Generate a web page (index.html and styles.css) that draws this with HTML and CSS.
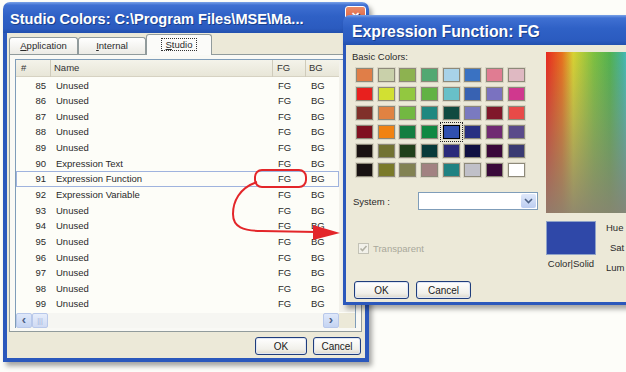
FILE: index.html
```html
<!DOCTYPE html>
<html lang="en">
<head>
    <meta charset="UTF-8">
    <meta name="viewport" content="width=device-width, initial-scale=1.0">
    <title>Studio Colors</title>
    <link rel="stylesheet" href="styles.css">
</head>
<body>
<div class="desktop">
    <div class="window studio">
        <div class="titlebar">
            <span class="title">Studio Colors: C:\Program Files\MSE\Ma...</span>
            <span class="close-btn">&#10005;</span>
        </div>
        <div class="window-body">
            <div class="tabs">
                <div class="tab tab-app"><u>A</u>pplication</div>
                <div class="tab tab-int"><u>I</u>nternal</div>
                <div class="tab tab-studio active"><span class="focus"><u>S</u>tudio</span></div>
            </div>
            <div class="tab-panel">
                <div class="listview">
                    <div class="lv-body">
                        <div class="lv-main">
                            <div class="lv-row lv-head">
                                <span>#</span><span>Name</span><span>FG</span><span>BG</span>
                            </div>
                            <div class="lv-rows">
                                <div class="lv-row"><span>85</span><span>Unused</span><span>FG</span><span>BG</span></div>
                                <div class="lv-row"><span>86</span><span>Unused</span><span>FG</span><span>BG</span></div>
                                <div class="lv-row"><span>87</span><span>Unused</span><span>FG</span><span>BG</span></div>
                                <div class="lv-row"><span>88</span><span>Unused</span><span>FG</span><span>BG</span></div>
                                <div class="lv-row"><span>89</span><span>Unused</span><span>FG</span><span>BG</span></div>
                                <div class="lv-row"><span>90</span><span>Expression Text</span><span>FG</span><span>BG</span></div>
                                <div class="lv-row selected"><span>91</span><span>Expression Function</span><span>FG</span><span>BG</span></div>
                                <div class="lv-row"><span>92</span><span>Expression Variable</span><span>FG</span><span>BG</span></div>
                                <div class="lv-row"><span>93</span><span>Unused</span><span>FG</span><span>BG</span></div>
                                <div class="lv-row"><span>94</span><span>Unused</span><span>FG</span><span>BG</span></div>
                                <div class="lv-row"><span>95</span><span>Unused</span><span>FG</span><span>BG</span></div>
                                <div class="lv-row"><span>96</span><span>Unused</span><span>FG</span><span>BG</span></div>
                                <div class="lv-row"><span>97</span><span>Unused</span><span>FG</span><span>BG</span></div>
                                <div class="lv-row"><span>98</span><span>Unused</span><span>FG</span><span>BG</span></div>
                                <div class="lv-row"><span>99</span><span>Unused</span><span>FG</span><span>BG</span></div>
                            </div>
                        </div>
                        <div class="vscroll"></div>
                    </div>
                    <div class="hscroll">
                        <span class="sb-btn">&#8249;</span>
                        <span class="sb-thumb">|||</span>
                        <span class="sb-track"></span>
                        <span class="sb-btn">&#8250;</span>
                        <span class="sb-corner"></span>
                    </div>
                </div>
            </div>
            <div class="buttons">
                <button class="btn btn-ok">OK</button>
                <button class="btn btn-cancel">Cancel</button>
            </div>
        </div>
    </div>

    <div class="window dialog">
        <div class="titlebar">
            <span class="title">Expression Function: FG</span>
        </div>
        <div class="window-body dialog-body">
            <div class="left-col">
                <div class="label">Basic Colors:</div>
                <div class="swatches">
                    <div class="swatch" style="background:#e07e48"></div>
                    <div class="swatch" style="background:#c9d0aa"></div>
                    <div class="swatch" style="background:#8db250"></div>
                    <div class="swatch" style="background:#52a872"></div>
                    <div class="swatch" style="background:#a8d2e8"></div>
                    <div class="swatch" style="background:#3a72c2"></div>
                    <div class="swatch" style="background:#e07c92"></div>
                    <div class="swatch" style="background:#dfb9c2"></div>

                    <div class="swatch" style="background:#e8201e"></div>
                    <div class="swatch" style="background:#d2e032"></div>
                    <div class="swatch" style="background:#92c840"></div>
                    <div class="swatch" style="background:#62b244"></div>
                    <div class="swatch" style="background:#68c0c8"></div>
                    <div class="swatch" style="background:#3862b2"></div>
                    <div class="swatch" style="background:#7a72c0"></div>
                    <div class="swatch" style="background:#d0388e"></div>

                    <div class="swatch" style="background:#80302a"></div>
                    <div class="swatch" style="background:#e08242"></div>
                    <div class="swatch" style="background:#72b842"></div>
                    <div class="swatch" style="background:#208880"></div>
                    <div class="swatch" style="background:#104a40"></div>
                    <div class="swatch" style="background:#7a7ac0"></div>
                    <div class="swatch" style="background:#80182a"></div>
                    <div class="swatch" style="background:#e84a48"></div>

                    <div class="swatch" style="background:#801020"></div>
                    <div class="swatch" style="background:#f08212"></div>
                    <div class="swatch" style="background:#127e40"></div>
                    <div class="swatch" style="background:#108842"></div>
                    <div class="swatch picked" style="background:#3050b0"></div>
                    <div class="swatch" style="background:#283082"></div>
                    <div class="swatch" style="background:#702a72"></div>
                    <div class="swatch" style="background:#5a4a8a"></div>

                    <div class="swatch" style="background:#1a1212"></div>
                    <div class="swatch" style="background:#727232"></div>
                    <div class="swatch" style="background:#20401a"></div>
                    <div class="swatch" style="background:#083a3a"></div>
                    <div class="swatch" style="background:#2a2a7a"></div>
                    <div class="swatch" style="background:#101042"></div>
                    <div class="swatch" style="background:#3a083a"></div>
                    <div class="swatch" style="background:#3a3a72"></div>

                    <div class="swatch" style="background:#181212"></div>
                    <div class="swatch" style="background:#7a7a2a"></div>
                    <div class="swatch" style="background:#828252"></div>
                    <div class="swatch" style="background:#a28282"></div>
                    <div class="swatch" style="background:#208282"></div>
                    <div class="swatch" style="background:#c0c0c8"></div>
                    <div class="swatch" style="background:#3a0a3a"></div>
                    <div class="swatch" style="background:#ffffff"></div>
                </div>
                <div class="system-row">
                    <span class="system-label">System :</span>
                    <div class="combo">
                        <span class="combo-arrow">
                            <svg width="9" height="6" viewBox="0 0 9 6"><path d="M1 1 L4.5 4.5 L8 1" fill="none" stroke="#4d6185" stroke-width="1.6"/></svg>
                        </span>
                    </div>
                </div>
                <div class="check-row">
                    <span class="checkbox">
                        <svg width="9" height="9" viewBox="0 0 9 9"><path d="M1.5 4.5 L3.5 6.5 L7.5 2" fill="none" stroke="#b2b1a4" stroke-width="1.6"/></svg>
                    </span>
                    <span class="check-label">Transparent</span>
                </div>
                <div class="dialog-buttons">
                    <button class="btn">OK</button>
                    <button class="btn">Cancel</button>
                </div>
            </div>
            <div class="right-col">
                <div class="spectrum"></div>
                <div class="solid-row">
                    <div class="solid-box">
                        <div class="solid"></div>
                        <div class="solid-label">Color|Solid</div>
                    </div>
                    <div class="hsl">
                        <span>Hue</span>
                        <span class="sat">Sat</span>
                        <span>Lum</span>
                    </div>
                </div>
            </div>
        </div>
    </div>

    <svg class="annotation" width="626" height="372" viewBox="0 0 626 372">
        <rect x="255" y="170" width="51" height="17" rx="7" fill="none" stroke="#e3262a" stroke-width="2"/>
        <path d="M257 182 C239 188 233 202 233 214 C233 227 243 231 262 231 L316 232" fill="none" stroke="#e3262a" stroke-width="2"/>
        <polygon points="313,225 340,233 313,240" fill="#e3262a"/>
    </svg>
</div>
</body>
</html>
```

FILE: styles.css
```css
body {
    margin: 0;
    background: #fdfdf9;
    font-family: "Liberation Sans", Arial, sans-serif;
    font-size: 9.5px;
    color: #2a2a2a;
}
.desktop {
    position: relative;
    width: 626px;
    height: 372px;
    overflow: hidden;
}

/* windows */
.window {
    position: absolute;
    display: flex;
    flex-direction: column;
    box-shadow: 3px 4px 5px rgba(0, 0, 0, 0.35);
    border-radius: 7px 7px 0 0;
}
.studio {
    left: 3px;
    top: 2px;
    width: 366px;
    height: 360px;
}
.dialog {
    left: 343px;
    top: 15px;
    width: 310px;
    height: 290px;
    z-index: 2;
}
.titlebar {
    position: relative;
    height: 31px;
    padding: 3px 0 0 7px;
    box-sizing: border-box;
    border-radius: 7px 7px 0 0;
    background: linear-gradient(#7aa2e8 0%, #3f70d2 10%, #2f61c6 45%, #2b5bbf 85%, #2250ae 100%);
    color: white;
    font-weight: bold;
    font-size: 14.6px;
    line-height: 28px;
    white-space: nowrap;
    text-shadow: 1px 1px 0 #1a3f8a;
}
.dialog .titlebar {
    height: 30px;
    padding: 4px 0 0 9px;
    line-height: 26px;
    font-size: 15.8px;
}
.close-btn {
    position: absolute;
    right: 3px;
    top: 4px;
    width: 21px;
    height: 21px;
    box-sizing: border-box;
    border: 1px solid #fff;
    border-radius: 3px;
    background: linear-gradient(#e98a68, #d9502e);
    font-size: 11px;
    line-height: 19px;
    text-align: center;
}
.window-body {
    flex: 1;
    display: flex;
    flex-direction: column;
    background: #ece9d8;
    border: 4px solid #2b58bc;
    border-top: none;
    padding-top: 1px;
}

/* tabs */
.tabs {
    display: flex;
    height: 20px;
    margin-left: 2px;
    position: relative;
    z-index: 1;
}
.tab {
    margin-top: 3px;
    height: 17px;
    box-sizing: border-box;
    border: 1px solid #919b9c;
    border-bottom: none;
    border-radius: 3px 3px 0 0;
    background: linear-gradient(#ffffff, #ecebe5);
    text-align: center;
    line-height: 16px;
}
.tab-app { width: 69px; }
.tab-int { width: 68px; }
.tab-studio { width: 66px; }
.tab.active {
    margin-top: 0;
    height: 21px;
    background: #fbfbf9;
    line-height: 20px;
}
.focus {
    border: 1px dotted #333;
    padding: 0 4px;
}
.tab-panel {
    height: 278px;
    box-sizing: border-box;
    margin: 0 3px 0 2px;
    border: 1px solid #919b9c;
    background: #f9f9f5;
    padding: 4px 5px 3px 5px;
}

/* list view */
.listview {
    height: 269px;
    box-sizing: border-box;
    border: 1px solid #7f9db9;
    background: #fdfdf8;
    display: flex;
    flex-direction: column;
}
.lv-body {
    flex: 1;
    display: flex;
}
.lv-main {
    flex: 1;
}
.lv-row {
    display: grid;
    grid-template-columns: 35px 222px 33px 1fr;
    height: 15.65px;
    line-height: 15.65px;
    white-space: nowrap;
}
.lv-row span:nth-child(1) {
    text-align: right;
    padding-right: 5px;
}
.lv-row span:nth-child(2),
.lv-row span:nth-child(3),
.lv-row span:nth-child(4) {
    padding-left: 5px;
}
.lv-head {
    height: 16.5px;
    line-height: 16.5px;
    background: linear-gradient(#f4f3ea, #e8e6d8);
    border-bottom: 1px solid #d6d2c2;
    box-sizing: border-box;
    color: #333;
}
.lv-head span {
    border-right: 1px solid #cfcbbb;
}
.lv-head span:nth-child(1) {
    text-align: left;
    padding-left: 5px;
}
.lv-head span:nth-child(2) { padding-left: 3px; }
.lv-head span:nth-child(3) { padding-left: 4px; }
.lv-head span:nth-child(4) { padding-left: 3px; border-right: none; }
.lv-rows {
    margin-top: 1px;
}
.lv-row.selected {
    box-shadow: inset 0 0 0 1px #9fb3de;
}
.vscroll {
    width: 16px;
    background: #f3f2ec;
}
.hscroll {
    display: flex;
    height: 15px;
    margin-top: 1px;
    background: #f5f5f0;
}
.sb-btn {
    width: 16px;
    box-sizing: border-box;
    border: 1px solid #b8c8ea;
    border-radius: 2px;
    background: linear-gradient(#dfe8fa, #c4d4f2);
    color: #4d6185;
    font-weight: bold;
    font-size: 13px;
    line-height: 12px;
    text-align: center;
}
.sb-thumb {
    width: 16px;
    box-sizing: border-box;
    border: 1px solid #b8c8ea;
    border-radius: 2px;
    background: linear-gradient(#e6edfb, #cfdaf3);
    color: #9eb1d8;
    font-size: 7px;
    line-height: 13px;
    text-align: center;
}
.sb-track {
    flex: 1;
    background: #f6f6f2;
}
.sb-corner {
    width: 16px;
    background: #ece9d8;
}

/* buttons */
.buttons {
    display: flex;
    justify-content: flex-end;
    gap: 6px;
    margin-top: 5px;
    padding-right: 4px;
}
.btn {
    height: 18px;
    padding: 0;
    border: 1px solid #1f3d7c;
    border-radius: 3px;
    background: linear-gradient(#ffffff, #f1f0ea 70%, #dcd8cc);
    box-shadow: inset 0 0 0 1px #dfe6f4;
    font-family: "Liberation Sans", Arial, sans-serif;
    font-size: 10px;
    color: #1a1a1a;
}
.btn-ok { width: 52px; }
.btn-cancel { width: 48px; }

/* colour dialog */
.dialog .window-body {
    border-width: 0 3px 3px 3px;
    padding-top: 0;
}
.dialog-body {
    flex-direction: row;
}
.left-col {
    flex-shrink: 0;
    width: 200px;
    box-sizing: border-box;
    padding: 6px 0 0 6px;
}
.label {
    line-height: 12px;
}
.swatches {
    display: grid;
    grid-template-columns: repeat(8, 17px);
    grid-auto-rows: 14px;
    column-gap: 4.7px;
    row-gap: 5px;
    margin: 5px 0 0 4px;
}
.swatch {
    box-sizing: border-box;
    border: 1px solid #8d8979;
    box-shadow: 0 0 0 1px #d9d5c5;
}
.swatch.picked {
    border: 1px solid #000;
    outline: 1px dotted #222;
    outline-offset: 2px;
}
.system-row {
    display: flex;
    align-items: center;
    margin-top: 15px;
    height: 18px;
}
.system-label {
    width: 65px;
    padding-left: 1px;
}
.combo {
    width: 120px;
    height: 18px;
    box-sizing: border-box;
    border: 1px solid #7f9db9;
    background: #fff;
    display: flex;
    justify-content: flex-end;
}
.combo-arrow {
    width: 15px;
    margin: 1px;
    border-radius: 2px;
    background: linear-gradient(#dfe8fa, #bccdf0);
    display: flex;
    align-items: center;
    justify-content: center;
}
.check-row {
    display: flex;
    align-items: center;
    gap: 4px;
    margin: 32px 0 0 6px;
    height: 12px;
}
.checkbox {
    width: 11px;
    height: 11px;
    box-sizing: border-box;
    border: 1px solid #c3c2b6;
    background: #f2f1ea;
    display: flex;
    align-items: center;
    justify-content: center;
}
.check-label {
    color: #a9a89b;
}
.dialog-buttons {
    display: flex;
    gap: 7px;
    margin: 27px 0 0 2px;
}
.dialog-buttons .btn {
    width: 55px;
}
.right-col {
    flex-shrink: 0;
    padding-top: 7px;
}
.spectrum {
    width: 160px;
    height: 161px;
    background:
        linear-gradient(rgba(140, 134, 116, 0) 0%, rgba(140, 134, 116, 0.35) 40%, rgba(138, 130, 114, 0.9) 100%),
        linear-gradient(90deg, #e82820 0%, #e8701e 10%, #d8d232 17%, #7cc040 30%, #52b250 40%, #44b4a0 48%, #46c2cc 52%, #3a5ad0 67%, #c042c0 83%, #e82820 100%);
}
.solid-row {
    display: flex;
    margin-top: 8px;
}
.solid {
    width: 50px;
    height: 34px;
    box-sizing: border-box;
    border: 1px solid #8fa2c8;
    background: #2f48a8;
}
.solid-label {
    margin-top: 3px;
    line-height: 12px;
    text-align: center;
    width: 50px;
}
.hsl {
    display: flex;
    flex-direction: column;
    margin-left: 10px;
    margin-top: -3px;
    line-height: 20px;
}
.hsl .sat {
    padding-left: 4px;
}

.annotation {
    position: absolute;
    left: 0;
    top: 0;
    z-index: 3;
}
```
